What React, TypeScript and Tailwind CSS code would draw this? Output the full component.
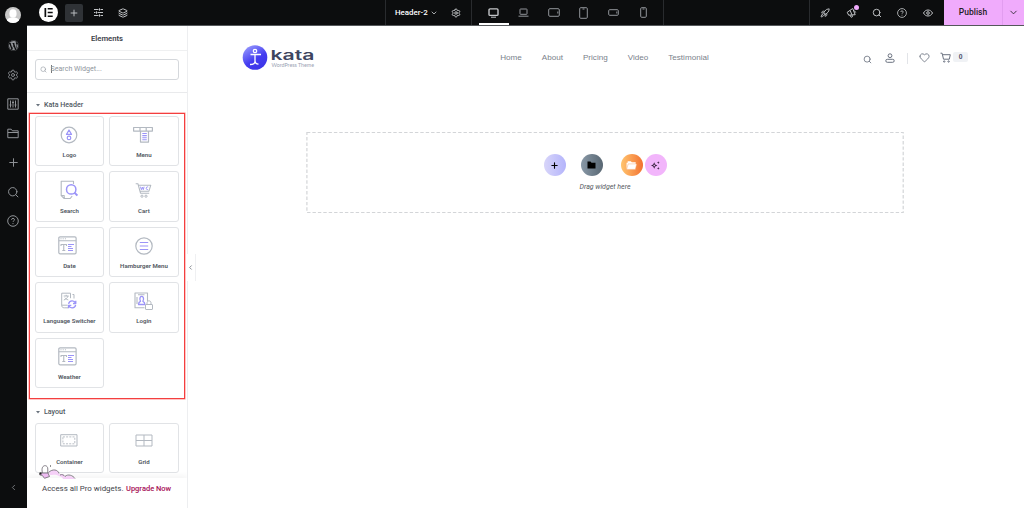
import type { ReactNode } from 'react';
import {
  ChevronDown,
  ChevronLeft,
  Heart,
  Layers,
  Plus,
  Rocket,
  Search,
  Settings,
} from 'lucide-react';
import { FaWordpress } from 'react-icons/fa';

const G = '#b3b9c1';
const P = '#9b94f8';

function Svg({ w, h, box, children, className = '' }: { w: number; h: number; box?: string; children: ReactNode; className?: string }) {
  return (
    <svg width={w} height={h} viewBox={box ?? `0 0 ${w} ${h}`} fill="none" stroke="currentColor" strokeWidth="1" strokeLinejoin="round" className={`shrink-0 ${className}`}>
      {children}
    </svg>
  );
}

function HelpIcon({ size }: { size: number }) {
  return (
    <Svg w={size} h={size} box="0 0 12 12">
      <circle cx="6" cy="6" r="5.3" />
      <path d="M4.5 4.8c0-1.9 3-1.9 3 0 0 1-1.5 1.1-1.5 2.1M6 8.1v1" />
    </Svg>
  );
}

function LogoIcon() {
  return (
    <Svg w={18} h={18}>
      <circle cx="9" cy="9" r="7.8" stroke={G} strokeWidth="1.2" />
      <path d="M9 4 11.500 8.400H6.500Z" stroke={P} strokeWidth="1.2" />
      <circle cx="9" cy="11.9" r="1.8" stroke={P} strokeWidth="1.2" />
    </Svg>
  );
}
function MenuIcon() {
  return (
    <Svg w={20} h={18} className="-ml-px">
      <path d="M.6 1.500h18.800v3.600H.6ZM7 1.500v3.600M13.200 1.500v3.600M7.500 5.100v11h8v-11" stroke={G} strokeWidth="1.2" />
      <path d="M9.300 7.500h4.500M9.300 9.600h4.500M9.300 11.700h4.500M9.300 13.800h4.500" stroke={P} strokeWidth="1.1" />
    </Svg>
  );
}
function SearchDocIcon() {
  return (
    <Svg w={18} h={20}>
      <path d="M13.500 4V1.200H1.200v14.500l3 2.800h6l2-2.500M1.500 15.500h2.700v2.700" stroke={G} strokeWidth="1.1" />
      <circle cx="11.200" cy="9.400" r="4.700" stroke={P} strokeWidth="1.500" />
      <path d="m14.400 12.600 3 3" stroke={P} strokeWidth="2" />
    </Svg>
  );
}
function CartIcon() {
  return (
    <Svg w={17} h={17}>
      <path d="M.7 1.700h2.200l2.600 9.500h8.700M3.500 3.200h12.300l-1.900 6H5" stroke={G} strokeWidth="1.1" />
      <circle cx="7" cy="14.200" r="1.100" stroke={G} />
      <circle cx="11" cy="14.200" r="1.100" stroke={G} />
      <path d="m5.500 4.700.9 3 1-2.500.9 2.500.8-3M13.200 5c-2.500-1-2.700 3.300-.3 2.500" stroke={P} />
    </Svg>
  );
}
function DateIcon() {
  return (
    <Svg w={19} h={19} className="-ml-[4px]">
      <rect x=".8" y=".8" width="17.300" height="17" rx="1.300" stroke={G} strokeWidth="1.200" />
      <path d="M.8 4.700h17.300M2.500 2.800h1M4.700 2.800h1M6.900 2.800h1M3 9.900V8.500h5.500v1.400M5.750 8.500v6.300M4.300 14.500h3" stroke={G} strokeWidth="1.100" />
      <path d="M10 8.500h6M10 10.500h3.500M10 12.500h5M10 14.500h5" stroke={P} strokeWidth="1.200" />
    </Svg>
  );
}
function HamburgerIcon() {
  return (
    <Svg w={18} h={18}>
      <circle cx="9" cy="9" r="8.200" stroke={G} strokeWidth="1.200" />
      <path d="M4.800 5.500h8.400M4.800 9h8.400M4.800 12.500h8.400" stroke={P} strokeWidth="1.200" />
    </Svg>
  );
}
function LanguageIcon() {
  return (
    <Svg w={18} h={18}>
      <path d="M10.500 1.200H1.700v12h6M1.700 13.200c0 1.700.8 2.600 2.500 2.600H8M10.500 1.200v5M12.500 2.500H14v4" stroke={G} />
      <path d="M3.700 4h5M6.200 2.800V4M8 4c-.5 2-2 3.200-4.200 4M4.800 5.700c.8 1 1.800 1.700 3.500 2.200" stroke={G} />
      <path d="M8.600 11.800c.8-3.700 5.800-3.700 6.900-.7M15.800 8.700v2.800H13M15.700 13c-.8 3.600-5.800 3.600-6.900.8M8.500 16.200v-2.800h2.800" stroke={P} strokeWidth="1.300" />
    </Svg>
  );
}
function LoginIcon() {
  return (
    <Svg w={19} h={19}>
      <path d="M13.500 9V1H1v14.700h9.500M4 2.800h6.500M3 5v7" stroke={G} strokeWidth="1.100" />
      <path d="M4.500 12.500c0-2 .8-2.800 2-3.200-1.800-4 .5-5 1.200-5s3 1 1.200 5c1 .4 2 1 2 3.200Z" stroke={P} strokeWidth="1.300" />
      <rect x="11.500" y="12.500" width="7" height="5" rx=".5" stroke={G} />
      <path d="M13 12.500v-1.700c0-2.600 4-2.600 4 0v1.700" stroke={G} />
    </Svg>
  );
}
function ContainerIcon() {
  return (
    <Svg w={18} h={13} className="-mt-[3px]">
      <rect x=".7" y=".7" width="16.300" height="11.300" stroke={G} />
      <rect x="2.900" y="2.900" width="11.900" height="6.900" stroke={G} strokeWidth=".9" strokeDasharray="2 1.200" />
    </Svg>
  );
}
function GridIcon() {
  return (
    <Svg w={18} h={13} className="-mt-[3px]">
      <path d="M1 1h16v11H1ZM1 6.500h16M9 1v11" stroke={G} />
    </Svg>
  );
}

function Card({ icon, label }: { icon: ReactNode; label: string }) {
  return (
    <div className="flex h-[50.400px] flex-col items-center rounded-[3px] border border-[#e1e3e6] bg-white">
      <div className="mt-[8px] flex h-5 items-center">{icon}</div>
      <div className="mt-[4.200px] whitespace-nowrap text-[6.100px] leading-[12px] font-semibold text-[#50565e]">{label}</div>
    </div>
  );
}

const widgets: [string, ReactNode][] = [
  ['Logo', <LogoIcon />],
  ['Menu', <MenuIcon />],
  ['Search', <SearchDocIcon />],
  ['Cart', <CartIcon />],
  ['Date', <DateIcon />],
  ['Hamburger Menu', <HamburgerIcon />],
  ['Language Switcher', <LanguageIcon />],
  ['Login', <LoginIcon />],
  ['Weather', <DateIcon />],
];

function Rail() {
  const icons: ReactNode[] = [
    <FaWordpress size={11} />,
    <Settings size={12} strokeWidth={1.8} />,
    <Svg w={12} h={12}>
      <rect x=".8" y=".8" width="10.400" height="10.400" />
      <path d="M3.500 2.500v7M6 2.500v7M8.500 2.500v7M2.500 7h2M5 4.500h2M7.500 7h2" />
    </Svg>,
    <Svg w={12} h={11}>
      <path d="M.8 9.700V1.200h3.400l1.200 1.600h5.800v6.900ZM.8 4.500h10.400" />
    </Svg>,
    <Plus size={13} strokeWidth={1.8} />,
    <Search size={12.5} strokeWidth={1.9} />,
    <HelpIcon size={12} />,
  ];
  return (
    <aside className="flex w-[27px] shrink-0 flex-col items-center bg-[#0c0d0e] pr-px text-[#909397]">
      <div className="mt-[7px] h-4 w-4 shrink-0 overflow-hidden rounded-full bg-[#c8c8c8]">
        <svg width="16" height="16" viewBox="0 0 16 16" fill="#fff">
          <ellipse cx="8" cy="6.500" rx="3.600" ry="4.300" />
          <path d="M1 16c0-4 3-5.500 7-5.500s7 1.500 7 5.500Z" />
        </svg>
      </div>
      <div className="mt-[8px] flex flex-col">
        {icons.map((icon, i) => (
          <div key={i} className="flex h-[29.300px] items-center justify-center">{icon}</div>
        ))}
      </div>
      <ChevronLeft size={9} className="mt-auto mb-[16px]" />
    </aside>
  );
}

function Cell({ w, children, className = '' }: { w: string; children: ReactNode; className?: string }) {
  return <div className={`relative flex h-full shrink-0 items-center justify-center ${w} ${className}`}>{children}</div>;
}

function TopBar() {
  return (
    <header className="flex h-[26px] shrink-0 items-center border-b border-[#55585b] bg-[#0c0d0e] text-[#c3c5c8]">
      <div className="ml-[12px] flex h-[19px] w-[19px] items-center justify-center rounded-full bg-white">
        <svg width="9" height="9" viewBox="0 0 9 9" fill="#0c0d0e">
          <path d="M.5 0h1.700v9H.5ZM3.700 0h5v1.600h-5ZM3.700 3.700h5v1.600h-5ZM3.700 7.400h5V9h-5Z" />
        </svg>
      </div>
      <div className="ml-[6.500px] flex h-[18px] w-[18px] items-center justify-center rounded-[2px] bg-[#2f3236]">
        <Plus size={10} strokeWidth={2.2} />
      </div>
      <Cell w="w-[31px]">
        <Svg w={9} h={9}>
          <path d="M0 1.500h4.500M6.500 1.500H9M0 4.500h1.500M3.500 4.500H9M0 7.500h4.500M6.500 7.500H9M5.500.3v2.400M2.500 3.300v2.400M5.500 6.300v2.400" />
        </Svg>
      </Cell>
      <Cell w="w-[18px]"><Layers size={10} strokeWidth={2.4} /></Cell>
      <div className="ml-auto flex h-full w-[87px] shrink-0 items-center border-x border-[#292b2e] pl-[9px]">
        <span className="w-[34px] whitespace-nowrap font-[Roboto,sans-serif] text-[7.900px] font-medium text-white">Header-2</span>
        <ChevronDown size={8} strokeWidth={2.5} className="ml-px" />
        <Settings size={10} strokeWidth={2.3} className="ml-[13px]" />
      </div>
      <div className="flex h-full w-[192px] shrink-0 border-r border-[#292b2e] pl-[6.500px]">
        <Cell w="w-[30px]" className="border-b-2 border-white pt-[2px]">
          <Svg w={11} h={10}><rect x="1" y=".9" width="9" height="6.500" rx="1" strokeWidth="1.400" /><path d="M3 9.200h5" /></Svg>
        </Cell>
        <Cell w="w-[30px]" className="text-[#92959a]">
          <Svg w={11} h={9}><rect x="2" y="1" width="7" height="5.300" rx=".5" /><path d="M.5 8.200h10" /></Svg>
        </Cell>
        <Cell w="w-[30px]" className="text-[#92959a]">
          <Svg w={12} h={9}><rect x=".7" y=".7" width="10.600" height="7.600" rx="1.200" /><path d="M9.800 3.500v2" /></Svg>
        </Cell>
        <Cell w="w-[30px]" className="text-[#92959a]">
          <Svg w={9} h={12}><rect x=".7" y=".7" width="7.600" height="10.600" rx="1" /><path d="M3.500 2h2" /></Svg>
        </Cell>
        <Cell w="w-[30px]" className="text-[#92959a]">
          <Svg w={11} h={7}><rect x=".7" y=".7" width="9.600" height="5.600" rx="1" /><path d="M8.800 2.500v2" /></Svg>
        </Cell>
        <Cell w="w-[30px]" className="text-[#92959a]">
          <Svg w={7} h={11}><rect x=".7" y=".7" width="5.600" height="9.600" rx="1" /><path d="M2.500 2h2" /></Svg>
        </Cell>
      </div>
      <div className="ml-[145px] flex h-full w-[135px] shrink-0 border-l border-[#292b2e] pl-[2px]">
        <Cell w="w-[26px]"><Rocket size={10} strokeWidth={2.2} /></Cell>
        <Cell w="w-[26px]">
          <Svg w={11} h={11}>
            <path d="M1.200 5.300 6.700 1.500l2.500 6.200-6.500.5ZM4 8.300l1.200 2 1.300-.7-.5-1.500M8.200 3.500l1.500 2M4.200 3.500l1.700 4.300" />
          </Svg>
          <span className="absolute top-[5px] right-[5px] h-[5px] w-[5px] rounded-full bg-[#f0abfc]" />
        </Cell>
        <Cell w="w-[25px]"><Search size={10} strokeWidth={2.3} /></Cell>
        <Cell w="w-[26px]"><HelpIcon size={10} /></Cell>
        <Cell w="w-[26px]">
          <Svg w={10} h={8}><path d="M.5 4C2.500 0 7.500 0 9.500 4 7.500 8 2.500 8 .5 4Z" /><circle cx="5" cy="4" r="1.300" /></Svg>
        </Cell>
      </div>
      <div className="flex h-full w-[80px] shrink-0 items-center bg-[#f0abfc] text-[#1f2124]">
        <div className="w-[58px] text-center font-[Roboto,sans-serif] text-[8.500px] font-medium">Publish</div>
        <div className="flex h-full w-[22px] items-center justify-center border-l border-[#e29df0]"><ChevronDown size={11} strokeWidth={1.8} /></div>
      </div>
    </header>
  );
}

function SectionTitle({ children }: { children: ReactNode }) {
  return (
    <div className="flex h-3 items-center gap-[4px] pl-px text-[7.100px] font-medium text-[#515962]">
      <svg width="4" height="3" viewBox="0 0 4 3" fill="#69727d"><path d="M0 0h4L2 2.500Z" /></svg>
      {children}
    </div>
  );
}

function Panel() {
  return (
    <section className="relative flex w-[161px] shrink-0 flex-col overflow-hidden border-r border-[#edeef0] bg-white font-[Roboto,sans-serif]">
      <div className="flex h-[25px] shrink-0 items-center justify-center border-b border-[#eff0f1] pt-px text-[7.700px] font-semibold text-[#3f444b]">Elements</div>
      <div className="flex h-[42px] shrink-0 items-start border-b border-[#e9eaec] pt-[8px] pl-[8px]">
        <div className="flex h-[20.500px] w-[144px] items-center rounded-[3px] border border-[#d5d8dc] pl-[4px] text-[7.100px] text-[#8f969e]">
          <Search size={7} strokeWidth={2} />
          <span className="ml-[3.500px] h-[8px] w-px bg-[#777]" />
          <span className="-ml-px">Search Widget...</span>
        </div>
      </div>
      <div className="flex shrink-0 flex-col px-[8px] pt-[6px]">
        <SectionTitle>Kata Header</SectionTitle>
        <div className="-ml-[6px] mt-[2px] h-[286px] w-[156px] border border-[#f33f3f] pt-[2px] pl-[4.700px] shadow-[0_0_0_0.5px_#f88]">
          <div className="grid w-[144px] grid-cols-2 gap-[5px]">
            {widgets.map(([label, icon]) => <Card key={label} label={label} icon={icon} />)}
          </div>
        </div>
        <div className="mt-[7px]"><SectionTitle>Layout</SectionTitle></div>
        <div className="mt-[4.500px] -ml-[0.300px] grid w-[144px] grid-cols-2 gap-[5px]">
          <Card label="Container" icon={<ContainerIcon />} />
          <Card label="Grid" icon={<GridIcon />} />
        </div>
      </div>
      <div className="absolute inset-x-0 bottom-0 h-[30px] bg-white text-[7.900px] text-[#3f444b] shadow-[0_-3px_5px_rgba(0,0,0,0.04)]">
        <svg width="40" height="17" viewBox="0 0 40 17" className="absolute -top-[14px] left-[12px]" fill="none" stroke="#77727a" strokeWidth=".9">
          <path d="M3.500 9C1 0 9 0 8.800 5v4" />
          <path d="M1 9h8l1.500 3.500-5 1.800-2.300-3L.8 11Z" fill="#efbcf3" />
          <path d="M10 8.500c4-4 9-3 10 2 3-1.500 5 0 6 2.500 3-2.500 8-1 10 2H24c-1-3-3-2-4-3-3-2-7-1-9-1Z" fill="#f5d0f7" stroke="none" />
          <path d="M9.500 8.500c4-4 9.500-3 10.500 1M21 11c2-1 4 0 5 1.500 3-3 8-1 10 2" />
          <path d="M.5 8.500h2v2h-2ZM11 1.500h1v1h-1Z" fill="#222" stroke="none" />
        </svg>
        <div className="flex h-[22px] items-center gap-[2px] pl-[15px] whitespace-nowrap">
          <span className="w-[82px]">Access all Pro widgets.</span>
          <span className="text-[7.500px] font-medium text-[#a60d55]">Upgrade Now</span>
        </div>
      </div>
    </section>
  );
}

function SiteHeader() {
  return (
    <div className="flex h-[64px] items-center pl-[54px] text-[#6b7280]">
      <svg width="75" height="28" viewBox="0 0 75 28" className="shrink-0">
        <defs>
          <linearGradient id="kata" x1="0" y1="0" x2=".6" y2="1">
            <stop offset="0" stopColor="#a3a7ff" />
            <stop offset=".65" stopColor="#443cf0" />
            <stop offset="1" stopColor="#3c35e8" />
          </linearGradient>
        </defs>
        <circle cx="13" cy="13.500" r="12.300" fill="url(#kata)" />
        <g fill="none" stroke="#fff" strokeWidth="1.300">
          <circle cx="13" cy="7" r="1.700" />
          <path d="M8.500 10.500h10.500M13 10.500v7c0 2-1.500 3-5 3M13 16.500c0 2 .8 3.500 3.500 3.700" />
        </g>
        <text x="28.500" y="16.300" textLength="44" lengthAdjust="spacingAndGlyphs" fontFamily="Inter, sans-serif" fontSize="13.500" fontWeight="600" fill="#3d4560">kata</text>
        <text x="29.500" y="22.800" textLength="42.500" lengthAdjust="spacingAndGlyphs" fontFamily="Lato, sans-serif" fontSize="5.200" fill="#9a9fb3">WordPress Theme</text>
      </svg>
      <nav className="ml-[183.200px] flex gap-[20px] font-['Liberation_Sans',sans-serif] text-[8.100px] text-[#7a818b]">
        <span>Home</span><span>About</span><span>Pricing</span><span>Video</span><span>Testimonial</span>
      </nav>
      <div className="ml-auto flex w-[161.500px] items-center">
        <Search size={9} strokeWidth={2.2} className="mt-[3px]" />
        <Svg w={10} h={10} className="ml-[13.500px]">
          <circle cx="5" cy="2.700" r="1.900" />
          <rect x=".8" y="6.300" width="8.400" height="3" rx="1.500" />
        </Svg>
        <span className="ml-[12px] h-[11px] w-px bg-[#e2e4e8]" />
        <Heart size={11} strokeWidth={1.9} className="-mt-px ml-[10.500px]" />
        <Svg w={11} h={11} className="-mt-px ml-[10px]">
          <path d="M.5 1.200h1.600l1.400 6h5.800l1-4.500H2.600" />
          <circle cx="4.200" cy="9.500" r=".7" /><circle cx="8.600" cy="9.500" r=".7" />
        </Svg>
        <span className="-mt-[2px] ml-[2.500px] flex h-[10px] w-[15px] items-center justify-center rounded-[2px] bg-[#f0f2f5] text-[5.500px] font-bold text-[#3d4560]">0</span>
      </div>
    </div>
  );
}

function DropArea() {
  return (
    <div className="mt-[42px] ml-[118px] flex h-[81px] w-[598px] flex-col items-center">
      <svg width="598" height="81" viewBox="0 0 598 81" className="-mb-[81px] shrink-0" fill="none">
        <rect x=".9" y=".5" width="596.300" height="80" stroke="#d3d5d8" strokeWidth="1.200" strokeDasharray="3.400 2" />
      </svg>
      <div className="mt-[22px] flex items-center">
        <div className="flex h-[22px] w-[22px] items-center justify-center rounded-full bg-linear-to-r from-[#d8d5f9] to-[#b4b4fb] text-black"><Plus size={9} strokeWidth={3} /></div>
        <div className="ml-[15px] flex h-[22px] w-[22px] items-center justify-center rounded-full bg-linear-to-r from-[#8999a7] to-[#596773]">
          <svg width="9" height="8" viewBox="0 0 9 8"><path d="M.5.500h3l1 1.200h4V7.500h-8Z" fill="#000" /></svg>
        </div>
        <div className="ml-[18px] flex h-[22px] w-[22px] items-center justify-center rounded-full bg-linear-to-r from-[#ffc46e] to-[#f17130]">
          <svg width="11" height="10" viewBox="0 0 10 9"><path d="M.5 8V2.500h1V1h2.800l1 1h3.500v4.500" fill="#fff" /><path d="M.5 8.500 2 3.500h7.700l-1.200 5Z" fill="#fff" stroke="#f5a067" strokeWidth=".4" /></svg>
        </div>
        <div className="ml-[2px] flex h-[22px] w-[22px] items-center justify-center rounded-full bg-[#f2b5fb] text-[#38233e]">
          <svg width="9" height="9" viewBox="0 0 9 9" fill="currentColor"><path fillRule="evenodd" d="M3.200 1.200 4.200 3.600 6.500 4.500 4.200 5.500 3.200 7.800 2.200 5.500 0 4.500 2.200 3.600ZM3.200 3.500 2.300 4.500 3.200 5.500 4.200 4.500ZM7.300.2 7.700 1.200 8.700 1.600 7.700 2 7.300 3 6.900 2 5.900 1.600 6.900 1.200ZM7.300 6 7.700 7 8.700 7.400 7.700 7.800 7.300 8.800 6.900 7.800 5.900 7.400 6.900 7Z" /></svg>
        </div>
      </div>
      <p className="mt-[5px] font-[Roboto,sans-serif] text-[7px] leading-[12px] text-[#555b62] italic">Drag widget here</p>
    </div>
  );
}

export default function App() {
  return (
    <div className="flex h-[508px] w-[1024px] overflow-hidden bg-white font-[Inter,sans-serif]">
      <Rail />
      <div className="flex min-w-0 flex-1 flex-col">
        <TopBar />
        <div className="flex min-h-0 flex-1">
          <Panel />
          <main className="relative flex-1 bg-white">
            <div className="absolute top-[228px] -left-px z-10 flex h-[27px] w-[9px] items-center border-r border-[#eff0f2] bg-white text-[#60666e]"><ChevronLeft size={7} strokeWidth={2.5} /></div>
            <SiteHeader />
            <DropArea />
          </main>
        </div>
      </div>
    </div>
  );
}
